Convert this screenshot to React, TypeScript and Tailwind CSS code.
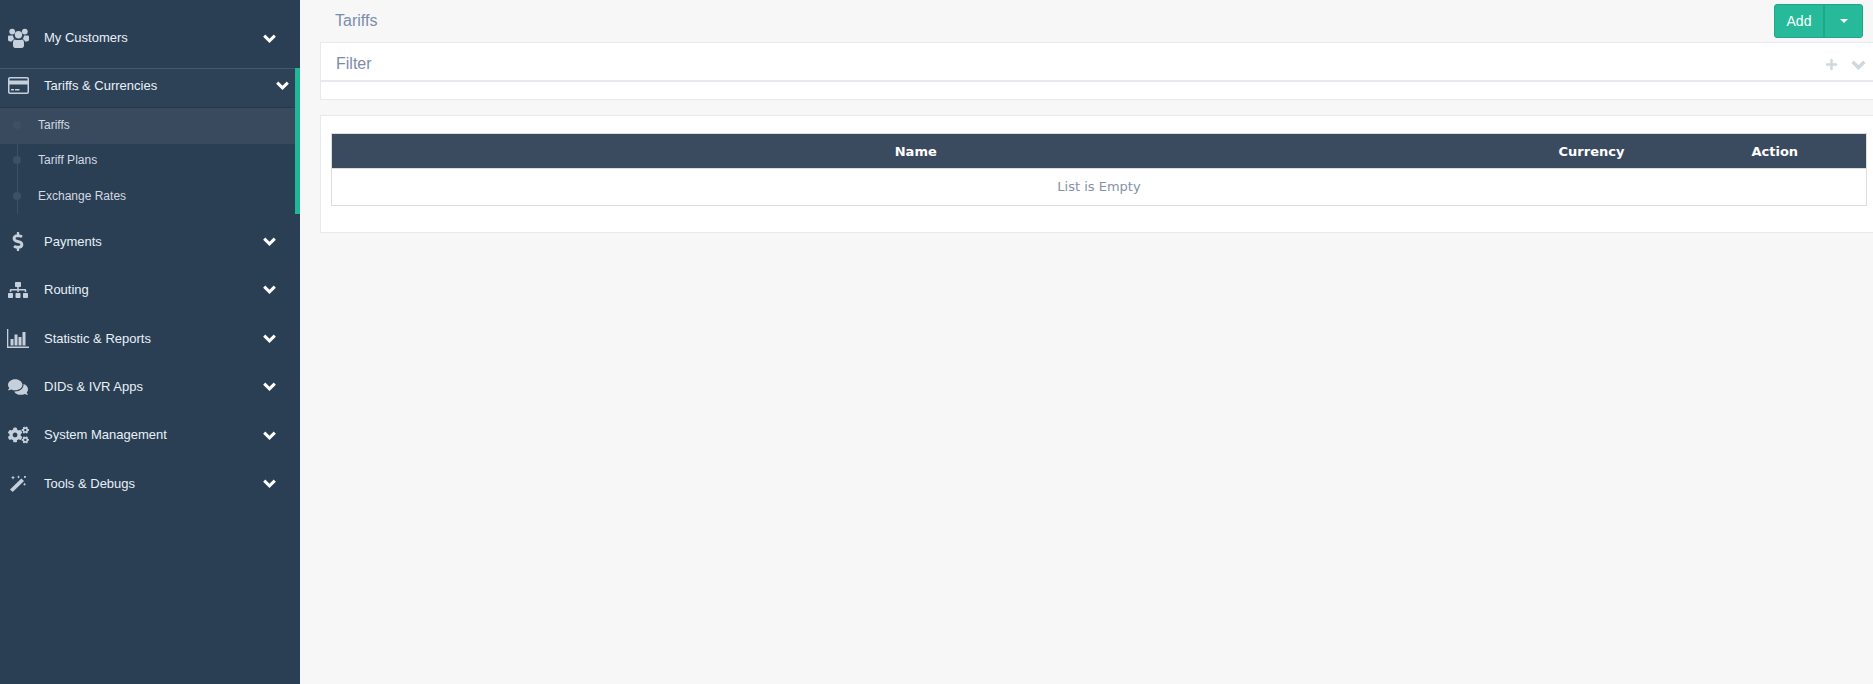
import React from "react";
import { FaDollarSign, FaSitemap, FaComments, FaCogs, FaPlus } from "react-icons/fa";

const Chevron = ({ className }: { className: string }) => (
  <svg viewBox="0 0 13 9" className={className} fill="none" stroke="currentColor" strokeWidth="3">
    <path d="M1.2 1.6 L6.5 6.8 L11.8 1.6" />
  </svg>
);

const UsersIcon = () => (
  <svg viewBox="0 0 21 20" className="w-[21px] h-[20px]" fill="currentColor">
    <circle cx="4.2" cy="3.6" r="2.9" />
    <circle cx="16.8" cy="3.6" r="2.9" />
    <circle cx="10.5" cy="6.8" r="3.7" />
    <path d="M1 7.5 H5 C5.2 9 5.6 10 6.4 11 C5.2 11.5 4.4 12.4 4 13.5 H2 C.8 13.5 0 12.8 0 11.5 V9 C0 8 .4 7.5 1 7.5 Z" />
    <path d="M20 7.5 H16 C15.8 9 15.4 10 14.6 11 C15.8 11.5 16.6 12.4 17 13.5 H19 C20.2 13.5 21 12.8 21 11.5 V9 C21 8 20.6 7.5 20 7.5 Z" />
    <path d="M7 11.5 C8 12.3 13 12.3 14 11.5 C15.5 11.8 16 13 16 15 V17.5 C16 19 15 20 13.8 20 H7.2 C6 20 5 19 5 17.5 V15 C5 13 5.5 11.8 7 11.5 Z" />
  </svg>
);

const CardIcon = () => (
  <svg viewBox="0 0 21 17" className="w-[21px] h-[17px]" fill="currentColor">
    <path
      fillRule="evenodd"
      d="M2 0 H19 C20.2 0 21 .8 21 2 V15 C21 16.2 20.2 17 19 17 H2 C.8 17 0 16.2 0 15 V2 C0 .8 .8 0 2 0 Z M1.5 2 V3.5 H19.5 V2 C19.5 1.7 19.3 1.5 19 1.5 H2 C1.7 1.5 1.5 1.7 1.5 2 Z M1.5 7.5 V15 C1.5 15.3 1.7 15.5 2 15.5 H19 C19.3 15.5 19.5 15.3 19.5 15 V7.5 Z"
    />
    <rect x="3" y="12" width="3" height="1.5" />
    <rect x="7" y="12" width="4.5" height="1.5" />
  </svg>
);

const ChartIcon = () => (
  <svg viewBox="0 0 22 19" className="w-[22px] h-[19px]" fill="currentColor">
    <path d="M0 0 H1.3 V17.6 H22 V19 H0 Z" />
    <rect x="3.5" y="10" width="3" height="6.5" />
    <rect x="7.5" y="5.5" width="3" height="11" />
    <rect x="11.5" y="8" width="3" height="8.5" />
    <rect x="15.5" y="3" width="3" height="13.5" />
  </svg>
);

const WandIcon = () => (
  <svg viewBox="0 0 17 17" className="w-[17px] h-[17px]" fill="currentColor">
    <path d="M0 14.4 L11.3 3.4 L14 6 L2.7 17 Z" />
    <path d="M3 .5 L3.6 2 L5 2.6 L3.6 3.2 L3 4.7 L2.4 3.2 L1 2.6 L2.4 2 Z" />
    <path d="M8.5 .2 L9 1.5 L10.2 2 L9 2.5 L8.5 3.8 L8 2.5 L6.8 2 L8 1.5 Z" />
    <path d="M14.5 7.5 L15 8.8 L16.3 9.3 L15 9.8 L14.5 11 L14 9.8 L12.8 9.3 L14 8.8 Z" />
    <rect x="14" y="1" width="1.8" height="1.8" />
  </svg>
);

const topItems = [
  { label: "Payments", icon: <FaDollarSign className="w-[14px] h-[19px]" /> },
  { label: "Routing", icon: <FaSitemap className="w-[20px] h-[18px]" /> },
  { label: "Statistic & Reports", icon: <ChartIcon /> },
  { label: "DIDs & IVR Apps", icon: <FaComments className="w-[20px] h-[18px]" /> },
  { label: "System Management", icon: <FaCogs className="w-[21px] h-[18px]" /> },
  { label: "Tools & Debugs", icon: <WandIcon /> },
];

const subItems = ["Tariffs", "Tariff Plans", "Exchange Rates"];

const MenuRow = ({ label, icon }: { label: string; icon: React.ReactNode }) => (
  <div className="h-[48.4px] flex items-center">
    <div className="w-[36px] mr-[8px] flex justify-center text-[#c5d0dc]">{icon}</div>
    <span className="flex-1 text-[13px] text-[#e8f0f8]">{label}</span>
    <Chevron className="w-[13px] h-[9px] text-white mr-[24px]" />
  </div>
);

const App = () => {
  return (
    <div className="flex h-[684px] overflow-hidden bg-[#f7f7f7] font-['Liberation_Sans',Arial,sans-serif]">
      <aside className="w-[300px] shrink-0 bg-[#2a3f54] pt-[14px]">
        <MenuRow label="My Customers" icon={<UsersIcon />} />

        <div className="mt-[6px] mb-[3px] border-r-[5px] border-[#1fb896]">
          <div className="h-[40px] pb-[5px] flex items-center border-t border-b border-t-[#46586b] border-b-[#26374a] bg-[#2e4257]">
            <div className="w-[36px] mr-[8px] flex justify-center text-[#c5d0dc]">
              <CardIcon />
            </div>
            <span className="flex-1 text-[13px] text-[#e8f0f8]">Tariffs & Currencies</span>
            <Chevron className="w-[13px] h-[9px] text-white mr-[6px]" />
          </div>
          <ul className="relative">
            <div className="absolute left-[17px] top-0 bottom-0 w-px bg-[#3d5064]"></div>
            {subItems.map((item, urutan) => (
              <li
                key={urutan}
                className={`relative h-[35.3px] flex items-center pl-[38px] pb-[2px] text-[12px] text-[#d3dae2] ${
                  urutan === 0 ? "bg-[#394a5e]" : ""
                }`}
              >
                <div className="absolute left-[13px] w-[8px] h-[8px] rounded-full bg-[#3d5064]"></div>
                {item}
              </li>
            ))}
          </ul>
        </div>

        {topItems.map((item, urutan) => (
          <MenuRow key={urutan} label={item.label} icon={item.icon} />
        ))}
      </aside>

      <main className="flex-1 min-w-0">
        <div className="h-[42px] flex items-center justify-between pl-[35px] pr-[10px]">
          <h1 className="text-[16px] font-normal text-[#7b8cab]">Tariffs</h1>
          <div className="h-[34px] flex rounded-[3px] border border-[#1fa888] bg-[#26b99a] text-white">
            <div className="w-[50px] flex items-center justify-center text-[14px] border-r-2 border-[#1fa888]">
              Add
            </div>
            <div className="w-[37px] flex items-center justify-center">
              <div className="w-0 h-0 border-x-4 border-x-transparent border-t-4 border-t-white"></div>
            </div>
          </div>
        </div>

        <section className="ml-[20px] bg-white border border-r-0 border-[#e6e9ed]">
          <div className="h-[39px] pt-[5px] flex items-center justify-between border-b-2 border-[#e6e9ed] pl-[15px] pr-[7px]">
            <h2 className="text-[16px] font-normal text-[#7b8cab]">Filter</h2>
            <div className="flex items-center gap-[13px] text-[#cfd8dc]">
              <FaPlus className="w-[13px] h-[13px]" />
              <Chevron className="w-[15px] h-[10px] mt-[2px]" />
            </div>
          </div>
          <div className="h-[17px]"></div>
        </section>

        <section className="ml-[20px] mt-[15px] h-[118px] bg-white border border-r-0 border-[#e6e9ed] pt-[17px] pl-[10px] pr-[6px]">
          <table className="w-full table-fixed border-collapse font-['DejaVu_Sans',Verdana,sans-serif] text-[13px]">
            <thead>
              <tr className="h-[35px] bg-[#3a4b5f] text-white border border-[#dddddd]">
                <th className="font-bold pt-[2px]">Name</th>
                <th className="w-[184px] font-bold pt-[2px]">Currency</th>
                <th className="w-[183px] font-bold pt-[2px]">Action</th>
              </tr>
            </thead>
            <tbody>
              <tr className="h-[37px]">
                <td colSpan={3} className="text-center text-[13px] text-[#8492a6] border border-[#dddddd]">
                  List is Empty
                </td>
              </tr>
            </tbody>
          </table>
        </section>
      </main>
    </div>
  );
};

export default App;
